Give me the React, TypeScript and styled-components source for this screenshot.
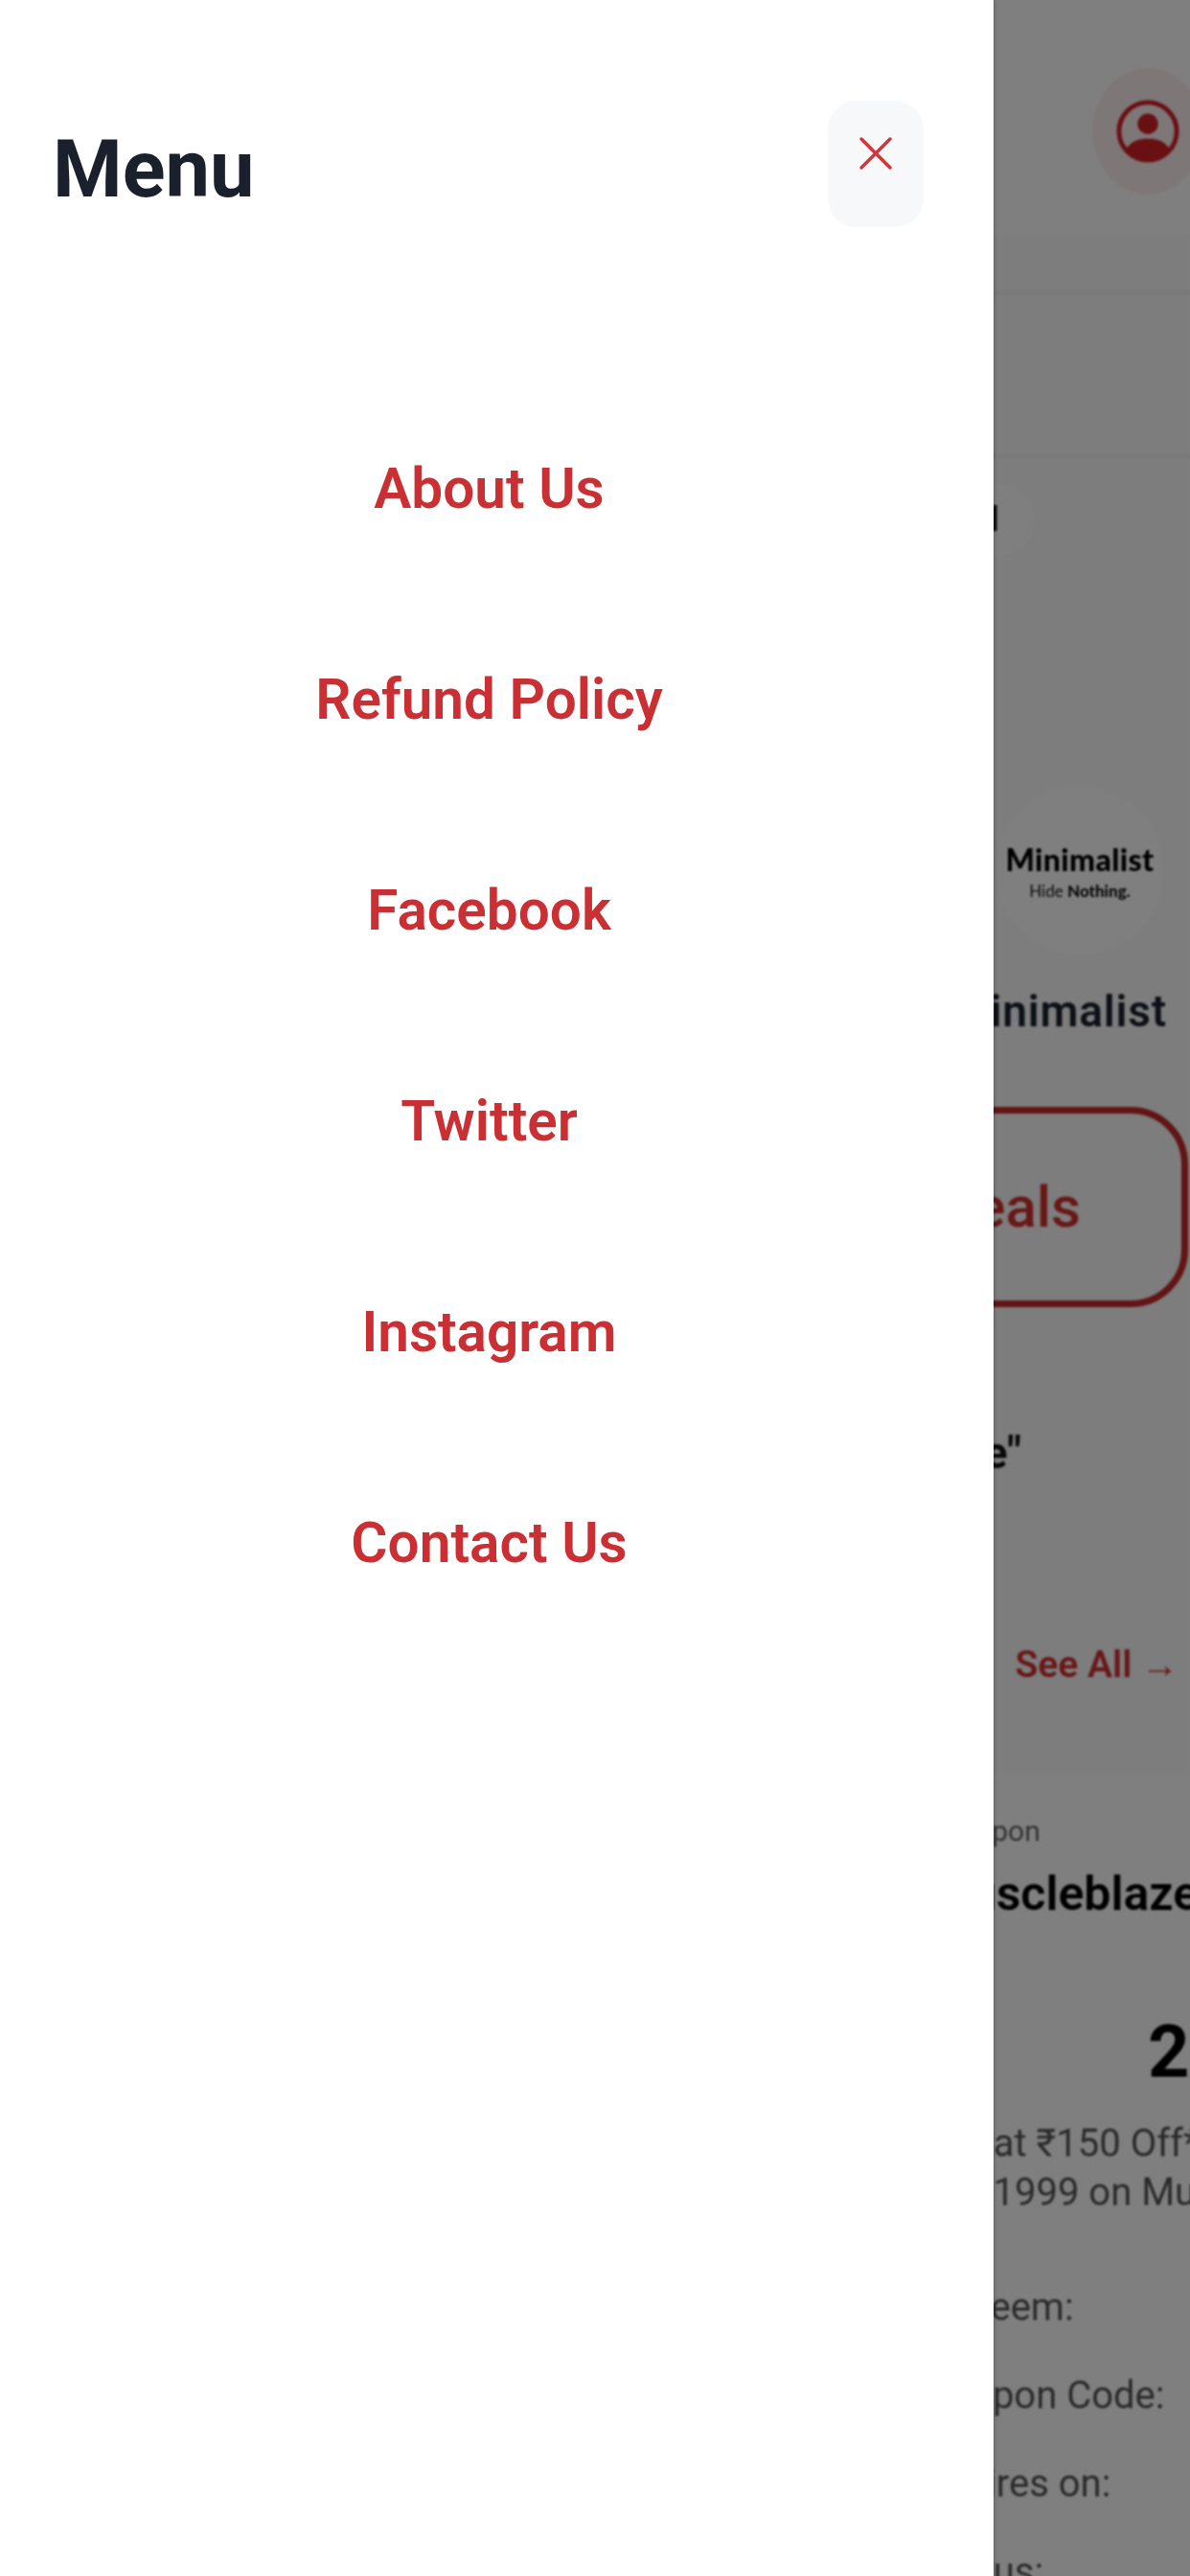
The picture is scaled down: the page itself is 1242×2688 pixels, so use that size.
import styled, { createGlobalStyle } from "styled-components";

const GlobalStyle = createGlobalStyle`
    html, body {
        margin: 0;
        padding: 0;
        background: #ffffff;
    }
    * {
        box-sizing: border-box;
    }
`;

const Screen = styled.div`
    position: relative;
    width: 1242px;
    height: 2688px;
    overflow: hidden;
    background: #ffffff;
    font-family: Roboto, "Liberation Sans", sans-serif;
`;

/* the page behind the drawer */
const Page = styled.div`
    display: flex;
    flex-direction: column;
    height: 100%;
    background: #fafafa;
    filter: blur(0.8px);
`;

const Header = styled.header`
    display: flex;
    flex: none;
    justify-content: flex-end;
    height: 245px;
    padding: 71px 0 0;
    background: #ffffff;
`;

const Avatar = styled.div`
    display: flex;
    align-items: center;
    justify-content: center;
    flex: none;
    width: 116px;
    height: 132px;
    margin-right: -14px;
    border-radius: 50%;
    background: #fdeeee;
    color: #d32027;
`;

const SearchBox = styled.div`
    flex: none;
    width: 1300px;
    height: 174px;
    margin: 59px 2px 0 auto;
    border: 3px solid #f0f0f0;
    border-radius: 60px;
`;

const ChipRow = styled.div`
    display: flex;
    flex: none;
    justify-content: flex-end;
    margin: 27px 162px 0 0;
`;

const Chip = styled.div`
    height: 75px;
    padding: 0 37px 0 40px;
    border-radius: 38px;
    background: #ffffff;
    color: #111111;
    font-size: 36px;
    font-weight: 500;
    line-height: 75px;
`;

const BrandCircle = styled.div`
    display: flex;
    flex: none;
    flex-direction: column;
    align-items: center;
    justify-content: center;
    width: 176px;
    height: 176px;
    margin: 240px 0 0 1039px;
    padding-top: 4px;
    border-radius: 50%;
    background: #ffffff;
`;

const BrandLogo = styled.div`
    color: #000000;
    font-family: Lato, sans-serif;
    font-size: 32px;
    font-weight: 900;
    line-height: 34px;
    letter-spacing: 0.4px;
`;

const BrandTag = styled.div`
    margin-top: 6px;
    color: #111111;
    font-family: Lato, sans-serif;
    font-size: 17px;
    line-height: 20px;
    b {
        font-weight: 900;
    }
`;

const BrandLabel = styled.div`
    flex: none;
    height: 46px;
    margin: 36px 24px 0 auto;
    color: #1a202c;
    font-size: 46px;
    font-weight: 600;
    line-height: 46px;
    letter-spacing: 0.8px;
    white-space: nowrap;
`;

const DealsBox = styled.div`
    display: flex;
    flex: none;
    align-items: center;
    justify-content: flex-end;
    width: 1000px;
    height: 209px;
    margin: 77px 2px 0 auto;
    padding-right: 105px;
    border: 7px solid #c62828;
    border-radius: 60px;
    color: #d32f2f;
    font-size: 60px;
    font-weight: 500;
    white-space: nowrap;
`;

const QuoteHeading = styled.div`
    flex: none;
    height: 50px;
    margin: 127px 176px 0 auto;
    color: #111111;
    font-size: 46px;
    font-weight: 700;
    line-height: 50px;
    white-space: nowrap;
`;

const SeeAll = styled.div`
    flex: none;
    height: 44px;
    margin: 174px 12px 0 auto;
    color: #d32f2f;
    font-size: 39px;
    font-weight: 600;
    line-height: 44px;
    white-space: nowrap;
`;

const CouponCard = styled.section`
    display: flex;
    flex: 1 0 auto;
    flex-direction: column;
    margin-top: 92px;
    background: #ffffff;
    white-space: nowrap;
`;

const CouponKicker = styled.div`
    height: 36px;
    margin: 42px 0 0 982px;
    color: #666666;
    font-size: 30px;
    line-height: 36px;
`;

const CouponTitle = styled.div`
    height: 56px;
    margin: 19px 0 0 968px;
    color: #000000;
    font-size: 50px;
    font-weight: 600;
    line-height: 56px;
`;

const CouponAmount = styled.div`
    height: 80px;
    margin: 97px 0 0 1198px;
    color: #000000;
    font-size: 76px;
    font-weight: 700;
    line-height: 80px;
`;

const CouponOffer = styled.div`
    margin-top: 30px;
    color: #555555;
    font-size: 40px;
    line-height: 51px;
`;

const OfferLine = styled.div<{ $left: number }>`
    margin-left: ${({ $left }) => $left}px;
`;

const CouponFacts = styled.div`
    display: flex;
    flex-direction: column;
    row-gap: 48px;
    margin: 73px 0 0 965px;
    color: #555555;
    font-size: 40px;
    line-height: 44px;
`;

const Scrim = styled.div`
    position: absolute;
    inset: 0;
    background: rgba(0, 0, 0, 0.5);
`;

const Drawer = styled.aside`
    position: absolute;
    top: 0;
    bottom: 0;
    left: 0;
    display: flex;
    flex-direction: column;
    width: 1037px;
    background: #ffffff;
    box-shadow: 1px 0 3px rgba(0, 0, 0, 0.25);
`;

const DrawerHeader = styled.div`
    display: flex;
    align-items: center;
    justify-content: space-between;
    padding: 105px 73px 0 55px;
`;

const DrawerTitle = styled.h2`
    margin: 0;
    padding-top: 12px;
    color: #1a202c;
    font-size: 83px;
    font-weight: 700;
    line-height: 94px;
`;

const CloseButton = styled.button`
    display: flex;
    align-items: flex-start;
    justify-content: center;
    width: 100px;
    height: 132px;
    padding: 37px 0 0;
    border: 0;
    border-radius: 30px;
    background: #f7f8fa;
    color: #d1343a;
`;

const MenuList = styled.nav`
    display: flex;
    flex-direction: column;
    row-gap: 150px;
    margin-top: 238px;
    padding-right: 16px;
`;

const MenuLink = styled.a`
    color: #c92f33;
    font-size: 58.5px;
    font-weight: 600;
    line-height: 70px;
    text-align: center;
`;

const links = ["About Us", "Refund Policy", "Facebook", "Twitter", "Instagram", "Contact Us"];

const UserIcon = () => (
    <svg width="68" height="68" viewBox="0 0 70 70" fill="none">
        <circle cx="35" cy="35" r="31" stroke="currentColor" strokeWidth="5" />
        <circle cx="35" cy="27" r="11" fill="currentColor" />
        <path d="M12 54c5-9 14-11 23-11s18 2 23 11a31 31 0 0 1-46 0z" fill="currentColor" />
    </svg>
);

const CloseIcon = () => (
    <svg width="36" height="36" viewBox="0 0 36 36" fill="none">
        <path d="M3 3l30 30M33 3L3 33" stroke="currentColor" strokeWidth="3.5" strokeLinecap="round" />
    </svg>
);

export default function App() {
    return (
        <Screen>
            <GlobalStyle />
            <Page>
                <Header>
                    <Avatar>
                        <UserIcon />
                    </Avatar>
                </Header>
                <SearchBox />
                <ChipRow>
                    <Chip>Deal</Chip>
                </ChipRow>
                <BrandCircle>
                    <BrandLogo>Minimalist</BrandLogo>
                    <BrandTag>
                        Hide <b>Nothing.</b>
                    </BrandTag>
                </BrandCircle>
                <BrandLabel>Minimalist</BrandLabel>
                <DealsBox>All Deals</DealsBox>
                <QuoteHeading>"Minimalist Store"</QuoteHeading>
                <SeeAll>See All →</SeeAll>
                <CouponCard>
                    <CouponKicker>Coupon</CouponKicker>
                    <CouponTitle>Muscleblaze</CouponTitle>
                    <CouponAmount>2</CouponAmount>
                    <CouponOffer>
                        <OfferLine $left={1005}>Flat ₹150 Off*</OfferLine>
                        <OfferLine $left={961}>on ₹1999 on Muscleblaze</OfferLine>
                    </CouponOffer>
                    <CouponFacts>
                        <div>Redeem:</div>
                        <div>Coupon Code:</div>
                        <div>Expires on:</div>
                        <div>Status:</div>
                    </CouponFacts>
                </CouponCard>
            </Page>
            <Scrim />
            <Drawer>
                <DrawerHeader>
                    <DrawerTitle>Menu</DrawerTitle>
                    <CloseButton aria-label="Close">
                        <CloseIcon />
                    </CloseButton>
                </DrawerHeader>
                <MenuList>
                    {links.map((label) => (
                        <MenuLink key={label}>{label}</MenuLink>
                    ))}
                </MenuList>
            </Drawer>
        </Screen>
    );
}
